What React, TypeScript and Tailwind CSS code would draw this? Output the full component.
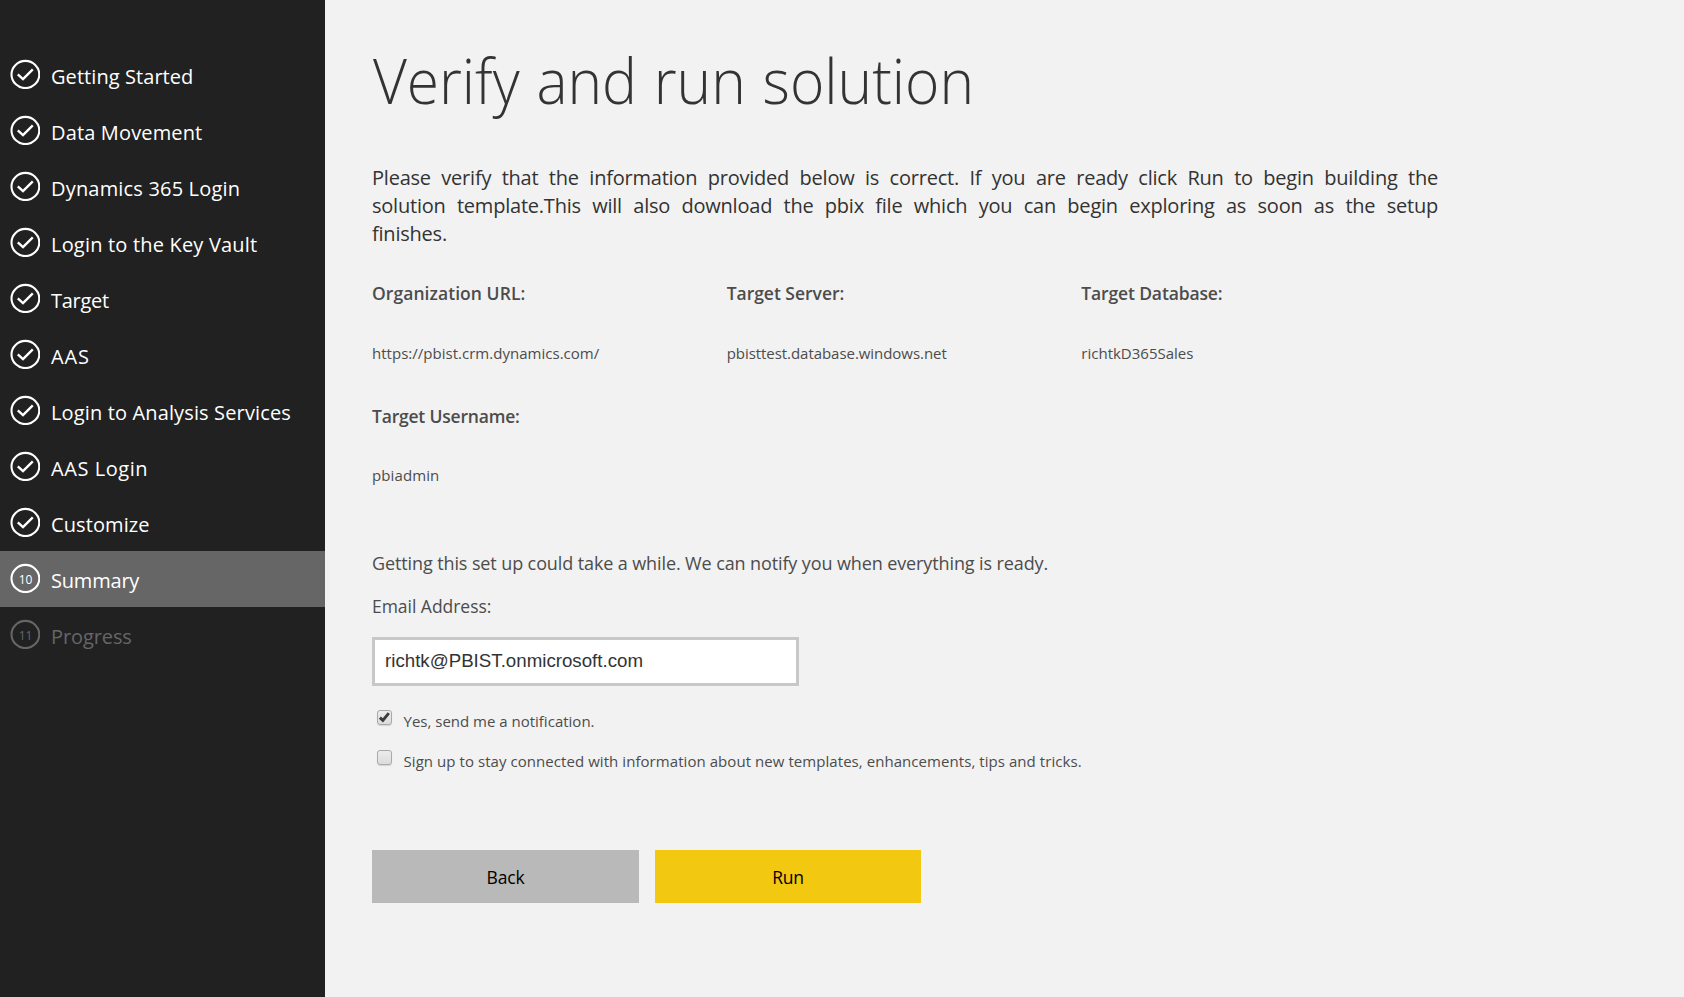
type StepState = "done" | "current" | "pending";

interface Step {
  label: string;
  state: StepState;
  spacing?: string;
}

const steps: Step[] = [
  { label: "Getting Started", state: "done", spacing: "tracking-[0.07px]" },
  { label: "Data Movement", state: "done", spacing: "tracking-[0.15px]" },
  { label: "Dynamics 365 Login", state: "done", spacing: "tracking-[0.18px]" },
  { label: "Login to the Key Vault", state: "done", spacing: "tracking-[0.19px]" },
  { label: "Target", state: "done", spacing: "tracking-[-0.3px]" },
  { label: "AAS", state: "done", spacing: "tracking-[0.9px]" },
  { label: "Login to Analysis Services", state: "done", spacing: "tracking-[0.14px]" },
  { label: "AAS Login", state: "done", spacing: "tracking-[0.55px]" },
  { label: "Customize", state: "done", spacing: "tracking-[0.1px]" },
  { label: "Summary", state: "current", spacing: "tracking-[-0.2px]" },
  { label: "Progress", state: "pending", spacing: "tracking-[-0.1px]" },
];

const details = [
  { label: "Organization URL:", value: "https://pbist.crm.dynamics.com/", labelSpacing: "tracking-[0.06px]", valueSpacing: "mt-[37px] tracking-[0.02px]" },
  { label: "Target Server:", value: "pbisttest.database.windows.net", labelSpacing: "tracking-[-0.02px]", valueSpacing: "mt-[37px] tracking-[-0.05px]" },
  { label: "Target Database:", value: "richtkD365Sales", labelSpacing: "tracking-[-0.14px]", valueSpacing: "mt-[37px]" },
  { label: "Target Username:", value: "pbiadmin", labelSpacing: "tracking-[-0.2px]", valueSpacing: "mt-9 tracking-[0.1px]" },
];

function StepIcon({ state, index }: { state: StepState; index: number }) {
  return (
    <svg width="30" height="30" viewBox="0 0 30 30" fill="none" stroke="currentColor" className="mt-3 shrink-0">
      <ellipse cx="15.4" cy="15.5" rx="13.9" ry="13.6" strokeWidth="2.1" />
      {state === "done" ? (
        <path d="M7.8 15.4 13 20.2 22.8 10.4" strokeWidth="2.4" />
      ) : (
        <text x="15.6" y="20.6" textAnchor="middle" stroke="none" fill="currentColor" className="text-[12px]">
          {index}
        </text>
      )}
    </svg>
  );
}

function StepRow({ step, index }: { step: Step; index: number }) {
  const tone =
    step.state === "current" ? "bg-[#666666] text-white" : step.state === "pending" ? "text-[#666666]" : "text-white";
  return (
    <li className={`flex h-14 gap-[11px] pl-2.5 ${tone}`}>
      <StepIcon state={step.state} index={index} />
      <span className={`pt-0.5 text-xl leading-[56px] ${step.spacing ?? ""}`}>{step.label}</span>
    </li>
  );
}

function CheckBox({ checked }: { checked: boolean }) {
  return (
    <span className="flex size-[15px] shrink-0 items-center justify-center rounded-[3px] border border-[#a9a9a9] bg-linear-to-b from-[#ececec] to-[#dcdcdc] shadow-[0_1px_1px_rgba(0,0,0,0.12)]">
      {checked && (
        <svg width="13" height="13" viewBox="0 0 13 13" fill="none" stroke="#3b3b3b" strokeWidth="2.9">
          <path d="M1.9 6.6 4.9 9.4 10.8 2.2" />
        </svg>
      )}
    </span>
  );
}

export default function App() {
  return (
    <div className="flex h-[997px] w-[1684px] overflow-hidden bg-[#f2f2f2] font-['Open_Sans','Noto_Sans',sans-serif]">
      <nav className="w-[325px] shrink-0 bg-[#212121] pt-[47px]">
        <ol>
          {steps.map((step, i) => (
            <StepRow key={step.label} step={step} index={i + 1} />
          ))}
        </ol>
      </nav>

      <main className="flex w-[1113px] flex-col pt-10 pl-[47px] text-[#4c4c4c]">
        <h1 className="origin-left scale-x-[0.946] pl-px text-[62px] leading-[80px] font-light whitespace-nowrap text-[#333333] [word-spacing:1.6px]">
          Verify and run solution
        </h1>

        <p className="mt-11 text-justify text-xl leading-7 tracking-[-0.22px] text-[#333333]">
          <span className="block [text-align-last:justify]">
            Please verify that the information provided below is correct. If you are ready click Run to begin building
            the
          </span>
          <span className="block [text-align-last:justify]">
            solution template.This will also download the pbix file which you can begin exploring as soon as the setup
          </span>
          <span className="block">finishes.</span>
        </p>

        <dl className="mt-[33px] grid w-[1064px] grid-cols-3 gap-y-10">
          {details.map((d) => (
            <div key={d.label}>
              <dt className={`text-[17.5px] leading-6 font-semibold ${d.labelSpacing}`}>{d.label}</dt>
              <dd className={`text-[15px] leading-[22px] ${d.valueSpacing}`}>{d.value}</dd>
            </div>
          ))}
        </dl>

        <p className="mt-[65px] text-lg leading-6 tracking-[-0.11px]">
          Getting this set up could take a while. We can notify you when everything is ready.
        </p>
        <label htmlFor="email" className="mt-[19px] text-[17.5px] leading-6 tracking-[-0.03px]">
          Email Address:
        </label>
        <input
          id="email"
          type="text"
          defaultValue="richtk@PBIST.onmicrosoft.com"
          className="mt-[19px] h-[49px] w-[427px] border-3 border-[#c8c8c8] bg-white pr-2 pb-px pl-[10px] font-['Liberation_Sans',sans-serif] text-[18.72px] text-[#333333] outline-none"
        />

        <div className="mt-6 flex gap-[11.5px] pl-[5px]">
          <CheckBox checked />
          <span className="text-[15px] leading-[22px]">Yes, send me a notification.</span>
        </div>
        <div className="mt-[18px] flex gap-[11.5px] pl-[5px]">
          <CheckBox checked={false} />
          <span className="text-[15px] leading-[22px] tracking-[0.06px]">
            Sign up to stay connected with information about new templates, enhancements, tips and tricks.
          </span>
        </div>

        <div className="mt-[78px] flex gap-4 text-[17.5px] tracking-[-0.2px] text-black">
          <button className="h-[53px] w-[267px] bg-[#b9b9b9] pt-px">Back</button>
          <button className="h-[53px] w-[266px] bg-[#f2c811] pt-px">Run</button>
        </div>
      </main>
    </div>
  );
}
